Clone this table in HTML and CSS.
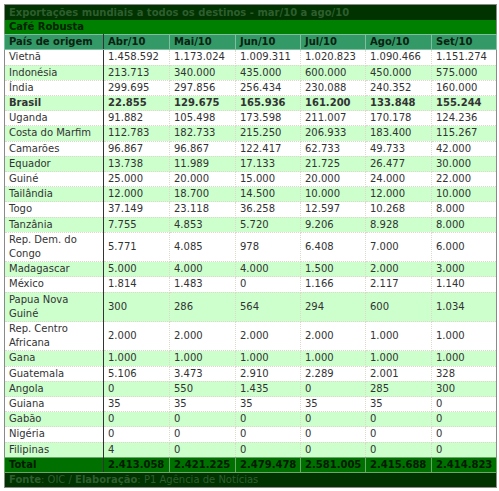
FILE: index.html
```html
<!DOCTYPE html>
<html lang="pt">
<head>
    <meta charset="UTF-8">
    <title>Exportações mundiais - Café Robusta</title>
    <link rel="stylesheet" href="styles.css">
</head>
<body>
    <table class="stats">
        <colgroup>
            <col class="c-name">
            <col class="c-a"><col class="c-a"><col class="c-b">
            <col class="c-b"><col class="c-a"><col class="c-b">
        </colgroup>
        <tr class="title"><td colspan="7">Exportações mundiais a todos os destinos - mar/10 a ago/10</td></tr>
        <tr class="kind"><td colspan="7">Café Robusta</td></tr>
        <tr class="head">
            <td class="name">País de origem</td>
            <td>Abr/10</td><td>Mai/10</td><td>Jun/10</td><td>Jul/10</td><td>Ago/10</td><td>Set/10</td>
        </tr>
        <tr><td class="name">Vietnã</td><td>1.458.592</td><td>1.173.024</td><td>1.009.311</td><td>1.020.823</td><td>1.090.466</td><td>1.151.274</td></tr>
        <tr class="alt"><td class="name">Indonésia</td><td>213.713</td><td>340.000</td><td>435.000</td><td>600.000</td><td>450.000</td><td>575.000</td></tr>
        <tr><td class="name">Índia</td><td>299.695</td><td>297.856</td><td>256.434</td><td>230.088</td><td>240.352</td><td>160.000</td></tr>
        <tr class="alt strong"><td class="name">Brasil</td><td>22.855</td><td>129.675</td><td>165.936</td><td>161.200</td><td>133.848</td><td>155.244</td></tr>
        <tr><td class="name">Uganda</td><td>91.882</td><td>105.498</td><td>173.598</td><td>211.007</td><td>170.178</td><td>124.236</td></tr>
        <tr class="alt"><td class="name">Costa do Marfim</td><td>112.783</td><td>182.733</td><td>215.250</td><td>206.933</td><td>183.400</td><td>115.267</td></tr>
        <tr><td class="name">Camarões</td><td>96.867</td><td>96.867</td><td>122.417</td><td>62.733</td><td>49.733</td><td>42.000</td></tr>
        <tr class="alt"><td class="name">Equador</td><td>13.738</td><td>11.989</td><td>17.133</td><td>21.725</td><td>26.477</td><td>30.000</td></tr>
        <tr><td class="name">Guiné</td><td>25.000</td><td>20.000</td><td>15.000</td><td>20.000</td><td>24.000</td><td>22.000</td></tr>
        <tr class="alt"><td class="name">Tailândia</td><td>12.000</td><td>18.700</td><td>14.500</td><td>10.000</td><td>12.000</td><td>10.000</td></tr>
        <tr><td class="name">Togo</td><td>37.149</td><td>23.118</td><td>36.258</td><td>12.597</td><td>10.268</td><td>8.000</td></tr>
        <tr class="alt"><td class="name">Tanzânia</td><td>7.755</td><td>4.853</td><td>5.720</td><td>9.206</td><td>8.928</td><td>8.000</td></tr>
        <tr><td class="name">Rep. Dem. do Congo</td><td>5.771</td><td>4.085</td><td>978</td><td>6.408</td><td>7.000</td><td>6.000</td></tr>
        <tr class="alt"><td class="name">Madagascar</td><td>5.000</td><td>4.000</td><td>4.000</td><td>1.500</td><td>2.000</td><td>3.000</td></tr>
        <tr><td class="name">México</td><td>1.814</td><td>1.483</td><td>0</td><td>1.166</td><td>2.117</td><td>1.140</td></tr>
        <tr class="alt"><td class="name">Papua Nova Guiné</td><td>300</td><td>286</td><td>564</td><td>294</td><td>600</td><td>1.034</td></tr>
        <tr><td class="name">Rep. Centro Africana</td><td>2.000</td><td>2.000</td><td>2.000</td><td>2.000</td><td>1.000</td><td>1.000</td></tr>
        <tr class="alt"><td class="name">Gana</td><td>1.000</td><td>1.000</td><td>1.000</td><td>1.000</td><td>1.000</td><td>1.000</td></tr>
        <tr><td class="name">Guatemala</td><td>5.106</td><td>3.473</td><td>2.910</td><td>2.289</td><td>2.001</td><td>328</td></tr>
        <tr class="alt"><td class="name">Angola</td><td>0</td><td>550</td><td>1.435</td><td>0</td><td>285</td><td>300</td></tr>
        <tr><td class="name">Guiana</td><td>35</td><td>35</td><td>35</td><td>35</td><td>35</td><td>0</td></tr>
        <tr class="alt"><td class="name">Gabão</td><td>0</td><td>0</td><td>0</td><td>0</td><td>0</td><td>0</td></tr>
        <tr><td class="name">Nigéria</td><td>0</td><td>0</td><td>0</td><td>0</td><td>0</td><td>0</td></tr>
        <tr class="alt"><td class="name">Filipinas</td><td>4</td><td>0</td><td>0</td><td>0</td><td>0</td><td>0</td></tr>
        <tr class="total"><td class="name">Total</td><td>2.413.058</td><td>2.421.225</td><td>2.479.478</td><td>2.581.005</td><td>2.415.688</td><td>2.414.823</td></tr>
        <tr class="source"><td colspan="7"><b>Fonte</b>: OIC / <b>Elaboração</b>: P1 Agência de Notícias</td></tr>
    </table>
</body>
</html>
```

FILE: styles.css
```css
* {
    box-sizing: border-box;
}

body {
    margin: 0;
    background: #fff;
    font-family: "DejaVu Sans", Verdana, sans-serif;
    font-size: 10px;
    color: #333;
}

.stats {
    margin: 4px 3px 4px 4px;
    width: 492px;
    table-layout: fixed;
    border-collapse: collapse;
    border: 1px solid #8a8a8a;
}

.c-name { width: 99px; }
.c-a { width: 66px; }
.c-b { width: 65px; }

.stats td {
    padding: 0 4px;
    line-height: 14.2px;
    border: 1px dotted #ddd9cc;
    vertical-align: middle;
    text-align: left;
}

.stats tr.alt td {
    background: #ccffcc;
}

.stats tr.strong td {
    font-weight: bold;
}

.stats td.name {
    border-right: 1px solid #333;
}

.stats .title td {
    background: #003300;
    color: #2e5e2e;
    font-weight: bold;
    line-height: 15px;
    border: none;
}

.stats .kind td {
    background: #008000;
    color: #002200;
    font-weight: bold;
    border: none;
}

.stats .head td {
    background: #339966;
    color: #0a2212;
    font-weight: bold;
    border: 1px solid #7fbf9f;
}

.stats .head td.name,
.stats .total td.name {
    border-right: 1px solid #333;
}

.stats .total td {
    background: #007000;
    color: #001a00;
    font-weight: bold;
    border: 1px solid #6aa86a;
}

.stats .source td {
    background: #003300;
    color: #2e5e2e;
    border: none;
}
```
